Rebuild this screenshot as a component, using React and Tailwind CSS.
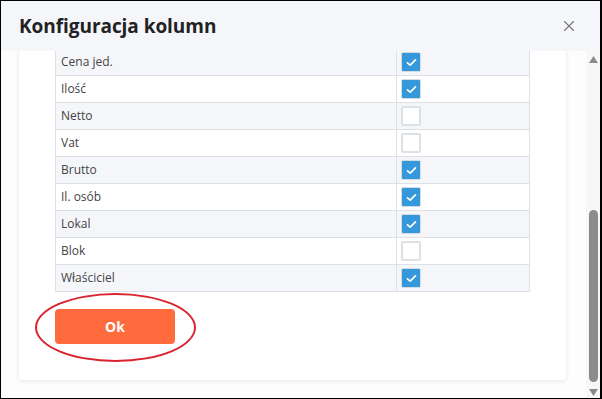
import { X } from 'lucide-react'

const ROWS = [
  { label: 'Cena jed.', on: true },
  { label: 'Ilość', on: true },
  { label: 'Netto', on: false },
  { label: 'Vat', on: false },
  { label: 'Brutto', on: true },
  { label: 'Il. osób', on: true },
  { label: 'Lokal', on: true },
  { label: 'Blok', on: false },
  { label: 'Właściciel', on: true },
]

function Checkbox({ on }) {
  if (on) {
    return (
      <div className="flex h-[20px] w-[20px] items-center justify-center rounded-[2px] border border-[#d6dbe0] bg-[#3498db]">
        <svg width="11" height="9" viewBox="0 0 11 9" fill="none">
          <path d="M1.5 4.8 L4.2 7.2 L9.5 1.8" stroke="white" strokeWidth="1.7" strokeLinecap="round" strokeLinejoin="round" />
        </svg>
      </div>
    )
  }
  return <div className="h-[20px] w-[20px] rounded-[2px] border-2 border-[#dde1e4] bg-white" />
}

export default function App() {
  return (
    <div
      className="flex h-[399px] w-[602px] flex-col overflow-hidden border-t border-l border-r-2 border-b border-black bg-[#fdfdfd]"
      style={{ fontFamily: '"Open Sans", "Noto Sans", sans-serif' }}
    >
      {/* Header */}
      <div className="relative z-10 flex h-[50px] shrink-0 items-center justify-between bg-[#f5f6fa] pl-[18px] pr-[22px]">
        <h1 className="text-[19px] font-bold leading-none text-[#222] tracking-[-0.05px]">Konfiguracja kolumn</h1>
        <X className="h-[18px] w-[18px] text-[#777]" strokeWidth={1.5} />
      </div>

      {/* Body */}
      <div className="flex min-h-0 flex-1">
        <div className="flex min-w-0 flex-1 flex-col justify-end overflow-hidden pb-[18px] pl-[18px] pr-[20px]">
          <div className="shrink-0 rounded-[4px] bg-white px-[36px] pb-[36px] shadow-[0_1px_5px_rgba(0,0,0,0.09)]">
            <div className="border border-t-0 border-[#dde1e6]">
              {ROWS.map((r, i) => (
                <div
                  key={r.label}
                  className={`flex h-[27px] border-t border-[#dde1e6] ${i % 2 === 0 ? 'bg-[#f5f6fa]' : 'bg-white'}`}
                >
                  <div className="flex w-[341px] items-center border-r border-[#dde1e6] pl-[5px] text-[12px] text-[#444]">
                    {r.label}
                  </div>
                  <div className="flex flex-1 items-center pl-[4px]">
                    <Checkbox on={r.on} />
                  </div>
                </div>
              ))}
            </div>
            <div className="relative mt-[17px] w-[120px]">
              <button className="h-[35px] w-[120px] rounded-[4px] bg-[#ff6b3d] text-[14px] font-bold text-white">
                Ok
              </button>
              <div className="pointer-events-none absolute left-[-20px] top-[-16px] h-[69px] w-[161px] rounded-[50%] border-2 border-[#d9232e]" />
            </div>
          </div>
        </div>

        {/* Scrollbar */}
        <div className="flex w-[14px] shrink-0 flex-col items-center bg-[#f7f7f7] pb-[2px] pt-[5px]">
          <svg width="9" height="7" viewBox="0 0 9 7"><path d="M4.5 0 L9 7 L0 7 Z" fill="#8a8a8a" /></svg>
          <div className="flex flex-1 flex-col justify-end pb-[7px]">
            <div className="h-[172px] w-[9px] rounded-full bg-[#8c8c8c]" />
          </div>
          <svg width="9" height="7" viewBox="0 0 9 7"><path d="M0 0 L9 0 L4.5 7 Z" fill="#8a8a8a" /></svg>
        </div>
      </div>
    </div>
  )
}
